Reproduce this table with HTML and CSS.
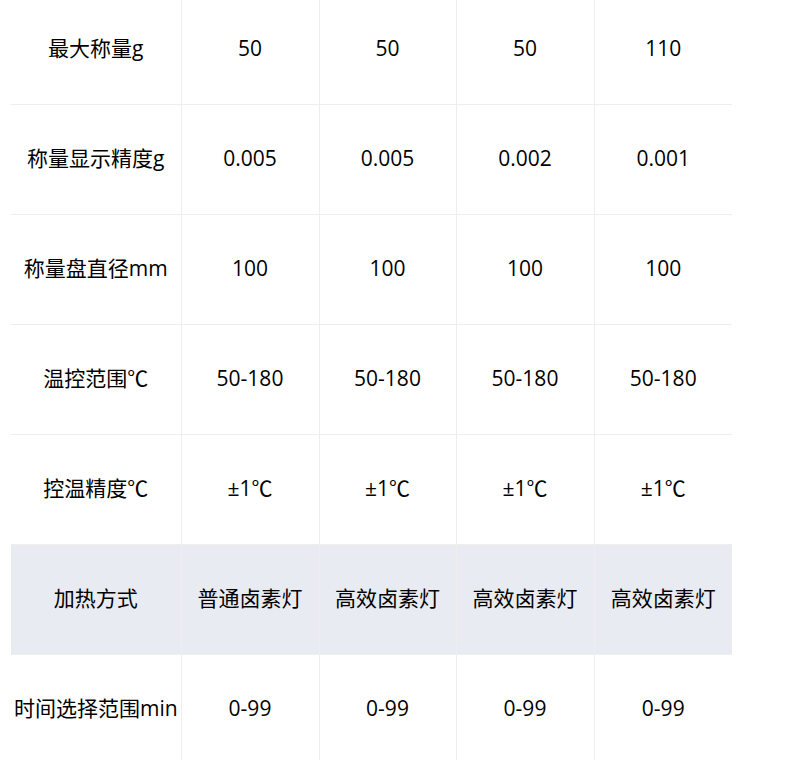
FILE: index.html
```html
<!DOCTYPE html>
<html lang="zh-CN">
<head>
<meta charset="utf-8">
<link rel="stylesheet" href="styles.css">
</head>
<body>
<table class="spec">
  <colgroup>
    <col class="c-label"><col class="c-val"><col class="c-val2"><col class="c-val"><col class="c-val">
  </colgroup>
  <tbody>
    <tr><td>最大称量g</td><td>50</td><td>50</td><td>50</td><td>110</td></tr>
    <tr><td>称量显示精度g</td><td>0.005</td><td>0.005</td><td>0.002</td><td>0.001</td></tr>
    <tr><td>称量盘直径mm</td><td>100</td><td>100</td><td>100</td><td>100</td></tr>
    <tr><td>温控范围℃</td><td>50-180</td><td>50-180</td><td>50-180</td><td>50-180</td></tr>
    <tr><td>控温精度℃</td><td>±1℃</td><td>±1℃</td><td>±1℃</td><td>±1℃</td></tr>
    <tr class="hl"><td>加热方式</td><td>普通卤素灯</td><td>高效卤素灯</td><td>高效卤素灯</td><td>高效卤素灯</td></tr>
    <tr><td>时间选择范围min</td><td>0-99</td><td>0-99</td><td>0-99</td><td>0-99</td></tr>
  </tbody>
</table>
</body>
</html>
```
FILE: styles.css
```css
html, body {
  margin: 0;
  padding: 0;
  background: #fff;
}
body {
  font-family: "Open Sans", "Noto Sans CJK SC", sans-serif;
  font-size: 21px;
  font-weight: 400;
  color: #000;
}
.spec {
  margin: -5px 0 0 11px;
  border-collapse: collapse;
  table-layout: fixed;
  width: 721px;
}
.c-label { width: 170px; }
.c-val { width: 138px; }
.c-val2 { width: 137px; }
.spec td {
  height: 105px;
  padding: 0 0 4px;
  line-height: 28px;
  text-align: center;
  vertical-align: middle;
  white-space: nowrap;
  border-bottom: 1px solid #eeeeee;
  border-left: 1px solid #eeeeee;
}
.spec td:first-child {
  border-left: none;
}
.spec tr.hl td {
  background: #e8ebf2;
}
```
